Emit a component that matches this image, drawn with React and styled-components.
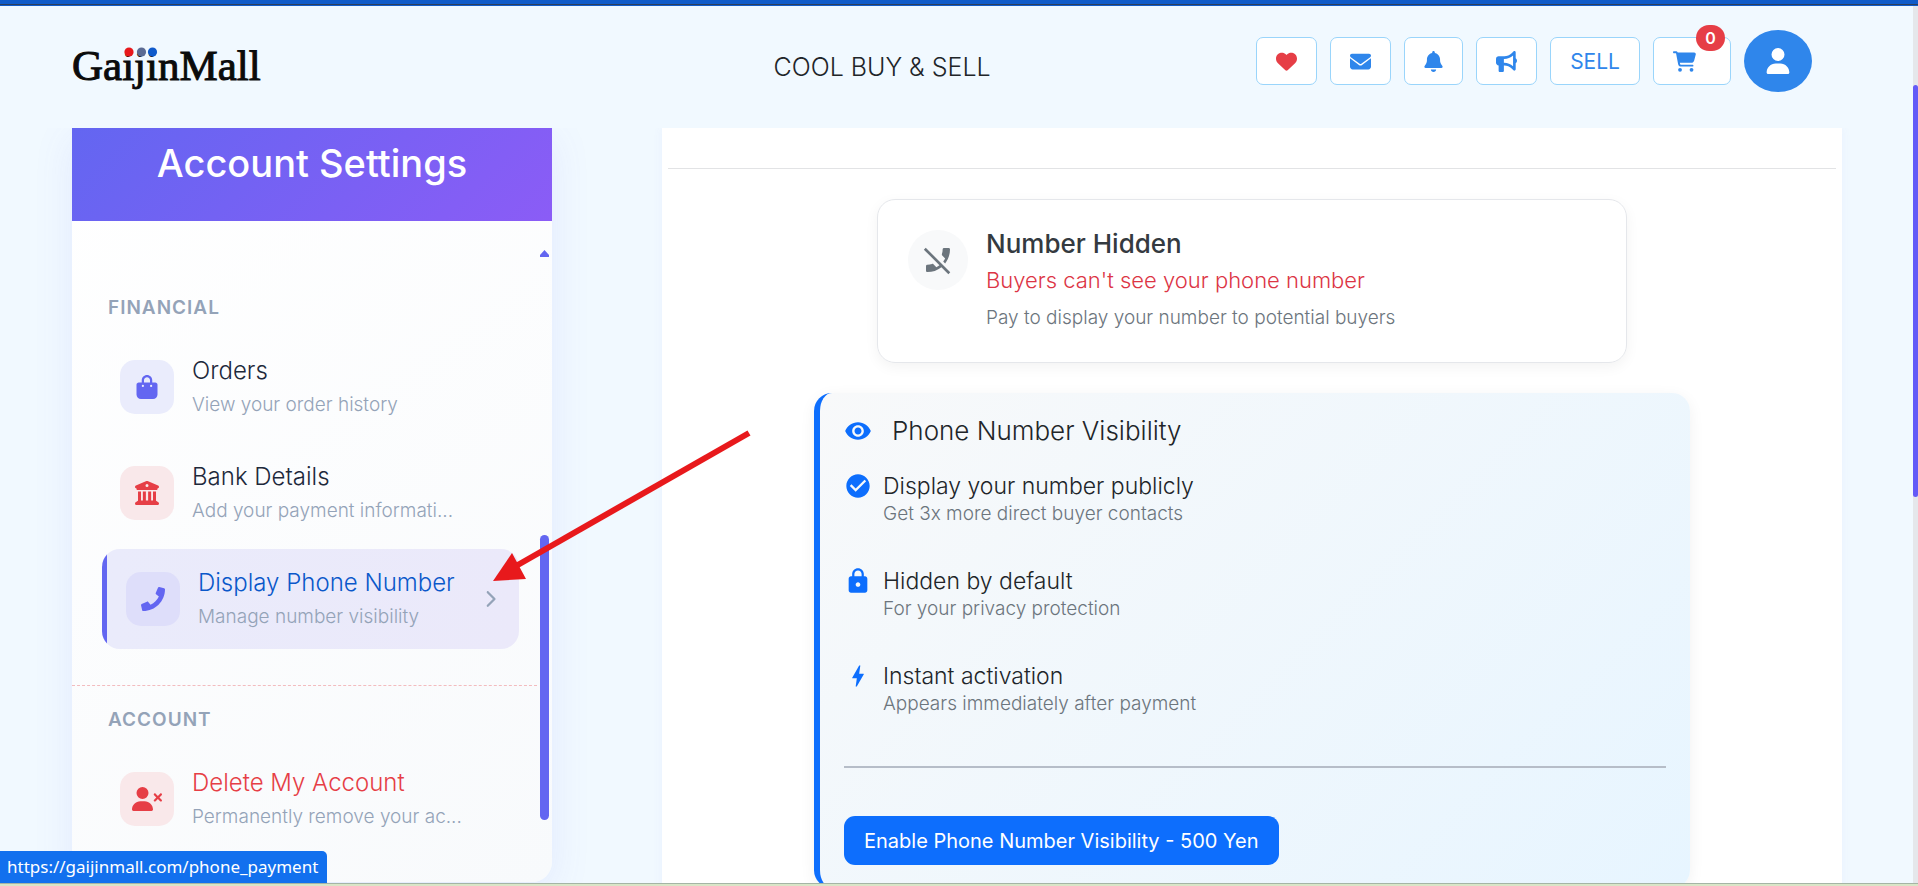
import React from 'react'
import styled, { createGlobalStyle, css } from 'styled-components'
import {
  FaHeart,
  FaEnvelope,
  FaBell,
  FaBullhorn,
  FaCartShopping,
  FaUser,
  FaUserXmark,
  FaBagShopping,
  FaBuildingColumns,
  FaChevronRight,
} from 'react-icons/fa6'
import { FaPhone } from 'react-icons/fa'
import { MdPhoneDisabled, MdVisibility, MdCheckCircle, MdLock, MdBolt } from 'react-icons/md'

const colors = {
  page: '#f1f9ff',
  blue: '#0d6efd',
  sky: '#2f86eb',
  indigo: '#6366f1',
  red: '#e63e46',
  slate: '#94a3b8',
  dark: '#212529',
  grey: '#6c757d',
}

const financialItems = [
  { title: 'Orders', text: 'View your order history', icon: FaBagShopping },
  { title: 'Bank Details', text: 'Add your payment informati...', icon: FaBuildingColumns, danger: true },
  { title: 'Display Phone Number', text: 'Manage number visibility', icon: FaPhone, active: true },
]

const accountItems = [
  { title: 'Delete My Account', text: 'Permanently remove your ac...', icon: FaUserXmark, iconSize: 30, danger: true, redTitle: true },
]

const features = [
  { title: 'Display your number publicly', text: 'Get 3x more direct buyer contacts', icon: MdCheckCircle },
  { title: 'Hidden by default', text: 'For your privacy protection', icon: MdLock },
  { title: 'Instant activation', text: 'Appears immediately after payment', icon: MdBolt },
]

function Logo() {
  return (
    <LogoLink href="#" aria-label="GaijinMall">
      <svg width="192" height="56" viewBox="0 0 192 56">
        <text x="0" y="42" fontFamily="'Liberation Serif', serif" fontSize="43" fill="#0b0b0b" stroke="#0b0b0b" strokeWidth="1">
          GaijinMall
        </text>
        <circle cx="57" cy="14" r="4.6" fill="#e8191c" />
        <circle cx="69.5" cy="14" r="4.6" fill="#5b6b93" />
        <circle cx="80.5" cy="14" r="4.6" fill="#0f5acb" />
      </svg>
    </LogoLink>
  )
}

function MenuItem({ item }) {
  const Icon = item.icon
  return (
    <Item href="#" $active={item.active}>
      <ItemIcon $danger={item.danger} $active={item.active}>
        <Icon size={item.iconSize || 24} />
      </ItemIcon>
      <ItemBody>
        <ItemTitle $active={item.active} $red={item.redTitle}>{item.title}</ItemTitle>
        <ItemText>{item.text}</ItemText>
      </ItemBody>
      {item.active && <FaChevronRight size={18} color={colors.slate} />}
    </Item>
  )
}

export default function App() {
  return (
    <Screen>
      <GlobalStyle />
      <TopStrip />
      <Viewport>
        <Page>
          <Header>
            <Logo />
            <Slogan>COOL BUY &amp; SELL</Slogan>
            <Actions>
              <ActionButton aria-label="Favorites" $color={colors.red}><FaHeart /></ActionButton>
              <ActionButton aria-label="Messages"><FaEnvelope /></ActionButton>
              <ActionButton aria-label="Notifications" $narrow><FaBell /></ActionButton>
              <ActionButton aria-label="Announcements"><FaBullhorn /></ActionButton>
              <ActionButton>SELL</ActionButton>
              <CartButton aria-label="Cart">
                <FaCartShopping />
                <Badge>0</Badge>
              </CartButton>
              <Avatar aria-label="Profile"><FaUser /></Avatar>
            </Actions>
          </Header>

          <Content>
            <Sidebar>
              <SidebarHeader>Account Settings</SidebarHeader>
              <SidebarBody>
                <Section>
                  <SectionLabel>FINANCIAL</SectionLabel>
                  <Menu>
                    {financialItems.map((item) => <MenuItem key={item.title} item={item} />)}
                  </Menu>
                </Section>
                <Section $divided>
                  <SectionLabel>ACCOUNT</SectionLabel>
                  <Menu>
                    {accountItems.map((item) => <MenuItem key={item.title} item={item} />)}
                  </Menu>
                </Section>
                <SidebarScroll>
                  <svg width="9" height="7" viewBox="0 0 9 7">
                    <path d="M4.5 0 L9 5 V7 H0 V5 Z" fill={colors.indigo} />
                  </svg>
                  <SidebarThumb />
                </SidebarScroll>
              </SidebarBody>
            </Sidebar>

            <Main>
              <Rule />
              <StatusCard>
                <StatusIcon><MdPhoneDisabled /></StatusIcon>
                <div>
                  <StatusTitle>Number Hidden</StatusTitle>
                  <StatusAlert>Buyers can't see your phone number</StatusAlert>
                  <StatusText>Pay to display your number to potential buyers</StatusText>
                </div>
              </StatusCard>

              <Panel>
                <PanelHead>
                  <MdVisibility size={28} color={colors.blue} />
                  <PanelTitle>Phone Number Visibility</PanelTitle>
                </PanelHead>
                <Features>
                  {features.map(({ title, text, icon: Icon }) => (
                    <Feature key={title}>
                      <Icon size={28} color={colors.blue} />
                      <div>
                        <FeatureTitle>{title}</FeatureTitle>
                        <FeatureText>{text}</FeatureText>
                      </div>
                    </Feature>
                  ))}
                </Features>
                <PanelRule />
                <EnableButton>Enable Phone Number Visibility - 500 Yen</EnableButton>
              </Panel>
            </Main>
          </Content>
        </Page>
        <PageScroll><PageThumb /></PageScroll>
        <LinkPreview>https://gaijinmall.com/phone_payment</LinkPreview>
        <Pointer width="264" height="160" viewBox="0 0 264 160" aria-hidden="true">
          <path d="M257 5 L24 138" stroke="#e8191c" strokeWidth="6" />
          <path d="M1 153 L20 125 L34 151 Z" fill="#e8191c" />
        </Pointer>
      </Viewport>
      <BottomStrip />
    </Screen>
  )
}

const GlobalStyle = createGlobalStyle`
  * {
    box-sizing: border-box;
  }
  body {
    margin: 0;
    background: ${colors.page};
    color: ${colors.dark};
    font-family: Inter, sans-serif;
    font-weight: 300;
  }
  h1, h2, h3, p, ul {
    margin: 0;
    padding: 0;
    font-weight: inherit;
  }
  a {
    color: inherit;
    text-decoration: none;
  }
  button {
    font: inherit;
    cursor: pointer;
  }
  svg {
    flex-shrink: 0;
  }
`

const Screen = styled.div`
  display: flex;
  flex-direction: column;
  height: 100vh;
  overflow: hidden;
`

const TopStrip = styled.div`
  flex: 0 0 6px;
  background: linear-gradient(#105bc8 4px, #2d3f5c 4px, #2d3f5c 5px, #105bc8 5px);
`

const BottomStrip = styled.div`
  flex: 0 0 3px;
  background: #d9e5c7;
  border-top: 1px solid #a5b5a5;
`

const Viewport = styled.div`
  position: relative;
  display: flex;
  flex: 1;
  min-height: 0;
`

const Page = styled.div`
  display: flex;
  flex-direction: column;
  flex: 1;
  min-width: 0;
`

const Header = styled.header`
  display: grid;
  grid-template-columns: 480px 1fr auto;
  align-items: center;
  flex: 0 0 122px;
  padding: 0 101px 12px 72px;
`

const LogoLink = styled.a`
  padding-top: 10px;
  svg {
    display: block;
  }
`

const Slogan = styled.p`
  padding: 12px 44px 0 0;
  font-size: 25px;
  line-height: 30px;
  text-align: center;
`

const Actions = styled.div`
  display: flex;
  align-items: center;
  gap: 13px;
`

const ActionButton = styled.button`
  display: flex;
  align-items: center;
  height: 48px;
  padding: 0 ${(p) => (p.$narrow ? 18 : 19)}px;
  border: 1px solid #9ad5fb;
  border-radius: 7px;
  background: #fff;
  color: ${(p) => p.$color || colors.sky};
  font-size: 21px;
  font-weight: 400;
`

const CartButton = styled(ActionButton)`
  position: relative;
  width: 78px;
  font-size: 23px;
`

const Badge = styled.span`
  position: absolute;
  top: -13px;
  right: 5px;
  width: 29px;
  border-radius: 13px;
  background: ${colors.red};
  color: #fff;
  font-size: 16px;
  font-weight: 600;
  line-height: 26px;
  text-align: center;
`

const Avatar = styled.button`
  display: flex;
  align-items: center;
  justify-content: center;
  width: 68px;
  height: 62px;
  border: 0;
  border-radius: 50%;
  background: ${colors.sky};
  color: #fff;
  font-size: 26px;
`

const Content = styled.div`
  display: grid;
  grid-template-columns: 480px 1fr;
  align-items: start;
  gap: 110px;
  flex: 1;
  min-height: 0;
  padding: 0 71px 0 72px;
  overflow: hidden;
`

const Sidebar = styled.aside`
  border-radius: 0 0 20px 20px;
  background: linear-gradient(145deg, #fff, #f8fafc);
  box-shadow: 0 10px 40px rgba(99, 102, 241, 0.1);
`

const SidebarHeader = styled.h1`
  padding: 11px 0 34px;
  background: linear-gradient(135deg, #6366f1, #8b5cf6);
  color: #fff;
  font-size: 38px;
  font-weight: 500;
  line-height: 48px;
  text-align: center;
`

const SidebarBody = styled.div`
  position: relative;
  padding: 53px 15px 33px 0;
`

const Section = styled.section`
  padding-top: 22px;
  ${(p) => p.$divided && css`
    margin-top: 36px;
    border-top: 1px dashed #f3bcbf;
  `}
`

const SectionLabel = styled.h2`
  padding-left: 36px;
  margin-bottom: 17px;
  color: ${colors.slate};
  font-size: 19px;
  font-weight: 600;
  letter-spacing: 1px;
  line-height: 24px;
`

const Menu = styled.nav`
  display: flex;
  flex-direction: column;
  gap: 6px;
  padding: 0 18px 0 30px;
`

const Item = styled.a`
  display: flex;
  align-items: center;
  gap: 18px;
  height: 100px;
  padding: 0 20px 0 18px;
  border-radius: 18px;
  ${(p) => p.$active && css`
    padding-left: 24px;
    background: linear-gradient(90deg, ${colors.indigo} 5px, #eaebfb 5px, #ebe9fa);
  `}
`

const ItemIcon = styled.span`
  display: flex;
  align-items: center;
  justify-content: center;
  flex: 0 0 54px;
  height: 54px;
  border-radius: 15px;
  background: ${(p) => (p.$danger ? '#f9e8ea' : p.$active ? '#dedefa' : '#eaecfc')};
  color: ${(p) => (p.$danger ? colors.red : colors.indigo)};
`

const ItemBody = styled.span`
  flex: 1;
  white-space: nowrap;
`

const ItemTitle = styled.span`
  display: block;
  color: ${(p) => (p.$active ? '#0a58ca' : p.$red ? colors.red : '#1e293b')};
  font-size: 24px;
  line-height: 34px;
`

const ItemText = styled.span`
  display: block;
  color: ${colors.slate};
  font-size: 19px;
  line-height: 33px;
`

const SidebarScroll = styled.div`
  position: absolute;
  top: 29px;
  right: 3px;
  bottom: 62px;
  display: flex;
  flex-direction: column;
  justify-content: space-between;
  width: 9px;
`

const SidebarThumb = styled.div`
  height: 50%;
  border-radius: 5px;
  background: ${colors.indigo};
`

const Main = styled.main`
  padding: 40px 6px 30px;
  background: #fff;
  box-shadow: 0 0 10px rgba(99, 102, 241, 0.06);
`

const Rule = styled.div`
  height: 1px;
  background: #e2e3e5;
`

const StatusCard = styled.section`
  display: flex;
  gap: 18px;
  max-width: 750px;
  margin: 30px auto;
  padding: 30px 30px 31px;
  border: 1px solid #e5e7eb;
  border-radius: 18px;
  box-shadow: 0 4px 14px rgba(0, 0, 0, 0.05);
`

const StatusIcon = styled.div`
  display: flex;
  align-items: center;
  justify-content: center;
  width: 60px;
  height: 60px;
  border-radius: 50%;
  background: #f8f9fa;
  color: ${colors.grey};
  font-size: 32px;
`

const StatusTitle = styled.h3`
  color: #343a40;
  font-size: 26px;
  font-weight: 500;
  line-height: 27px;
`

const StatusAlert = styled.p`
  margin-top: 10px;
  color: #dc3545;
  font-size: 22px;
  line-height: 26px;
`

const StatusText = styled.p`
  margin-top: 12px;
  color: ${colors.grey};
  font-size: 19px;
  line-height: 26px;
`

const Panel = styled.section`
  max-width: 876px;
  margin: 0 auto;
  padding: 23px 24px;
  border-left: 6px solid ${colors.blue};
  border-radius: 18px;
  background: linear-gradient(135deg, #f8f9fa, #e7f5ff);
  box-shadow: 0 4px 16px rgba(0, 0, 0, 0.06);
`

const PanelHead = styled.div`
  display: flex;
  align-items: center;
  gap: 20px;
`

const PanelTitle = styled.h2`
  font-size: 26px;
  line-height: 30px;
`

const Features = styled.ul`
  display: flex;
  flex-direction: column;
  gap: 39px;
  margin-top: 26px;
  list-style: none;
`

const Feature = styled.li`
  display: flex;
  gap: 11px;
`

const FeatureTitle = styled.h3`
  font-size: 23px;
  line-height: 28px;
`

const FeatureText = styled.p`
  color: ${colors.grey};
  font-size: 19px;
  line-height: 28px;
`

const PanelRule = styled.div`
  height: 2px;
  margin: 48px 0;
  background: #b6bdc8;
`

const EnableButton = styled.button`
  display: block;
  height: 49px;
  padding: 0 20px;
  border: 0;
  border-radius: 11px;
  background: ${colors.blue};
  color: #fff;
  font-size: 20px;
  font-weight: 400;
`

const PageScroll = styled.div`
  display: grid;
  grid-template-rows: 9% 47% 1fr;
  flex: 0 0 5px;
  background: #e5e7eb;
`

const PageThumb = styled.div`
  grid-row: 2;
  border-radius: 3px;
  background: #645af7;
`

const LinkPreview = styled.div`
  position: absolute;
  left: 0;
  bottom: 0;
  padding: 0 9px 0 7px;
  border-radius: 0 5px 0 0;
  background: #1270ee;
  color: #fff;
  font-family: 'Noto Sans', sans-serif;
  font-size: 17px;
  font-weight: 400;
  line-height: 32px;
`

/* callout arrow aimed at the active menu entry */
const Pointer = styled.svg`
  position: absolute;
  top: 422px;
  left: 492px;
  pointer-events: none;
`
